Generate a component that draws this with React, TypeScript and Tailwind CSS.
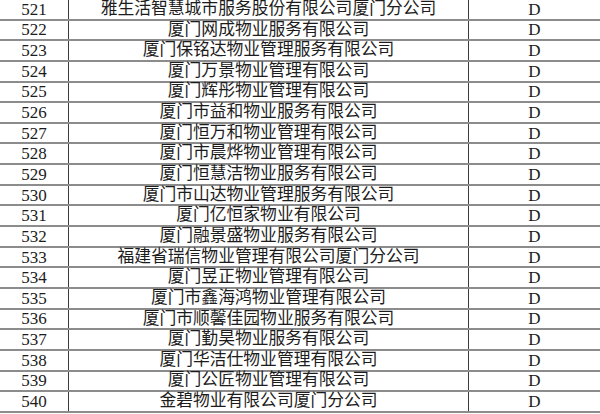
const rows: [number, string][] = [
  [521, '雅生活智慧城市服务股份有限公司厦门分公司'],
  [522, '厦门网成物业服务有限公司'],
  [523, '厦门保铭达物业管理服务有限公司'],
  [524, '厦门万景物业管理有限公司'],
  [525, '厦门辉彤物业管理有限公司'],
  [526, '厦门市益和物业服务有限公司'],
  [527, '厦门恒万和物业管理有限公司'],
  [528, '厦门市晨烨物业管理有限公司'],
  [529, '厦门恒慧洁物业服务有限公司'],
  [530, '厦门市山达物业管理服务有限公司'],
  [531, '厦门亿恒家物业有限公司'],
  [532, '厦门融景盛物业服务有限公司'],
  [533, '福建省瑞信物业管理有限公司厦门分公司'],
  [534, '厦门昱正物业管理有限公司'],
  [535, '厦门市鑫海鸿物业管理有限公司'],
  [536, '厦门市顺馨佳园物业服务有限公司'],
  [537, '厦门勤昊物业服务有限公司'],
  [538, '厦门华洁仕物业管理有限公司'],
  [539, '厦门公匠物业管理有限公司'],
  [540, '金碧物业有限公司厦门分公司'],
];

export default function App() {
  return (
    <div
      className="w-[600px] h-[414px] overflow-hidden bg-white text-[#1c1c1c]"
      style={{ fontFamily: '"Liberation Serif", "Noto Sans CJK SC", serif' }}
    >
      {rows.map(([no, name]) => (
        <div key={no} className="flex h-[20.65px] border-b-2 border-[#8c8c8c]">
          <div className="w-[69px] shrink-0 flex items-center justify-center border-r-[1.5px] border-[#3a3a3a] text-[17px] leading-none">
            {no}
          </div>
          <div className="w-[400px] shrink-0 flex items-center justify-center border-r-[1.5px] border-[#3a3a3a] text-[16.8px] leading-none whitespace-nowrap">
            {name}
          </div>
          <div className="flex-1 flex items-center justify-center text-[17px] leading-none">D</div>
        </div>
      ))}
    </div>
  );
}
